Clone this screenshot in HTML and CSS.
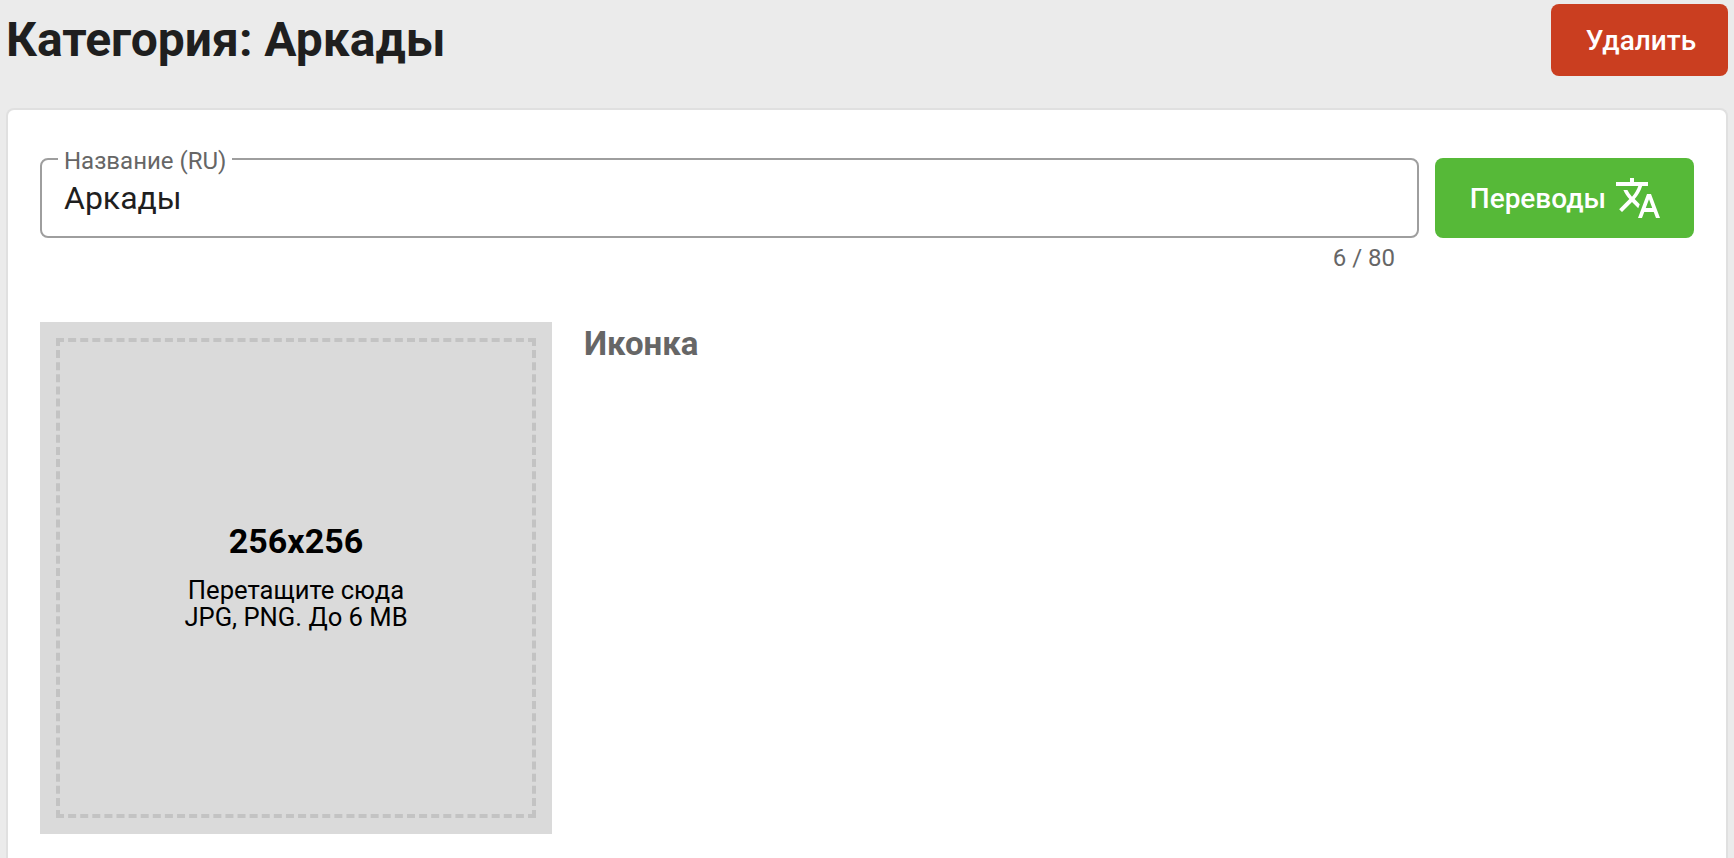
FILE: index.html
```html
<!DOCTYPE html>
<html lang="ru">
<head>
    <meta charset="UTF-8">
    <meta name="viewport" content="width=device-width, initial-scale=1.0">
    <title>Категория: Аркады</title>
    <link rel="stylesheet" href="styles.css">
</head>
<body>
    <header class="page-header">
        <h1>Категория: Аркады</h1>
        <button type="button" class="btn btn-delete">Удалить</button>
    </header>

    <main class="card">
        <!-- Category name -->
        <div class="name-row">
            <div class="field">
                <div class="field-box">
                    <label for="name_ru">Название (RU)</label>
                    <input type="text" id="name_ru" name="name_ru" value="Аркады" maxlength="80">
                </div>
                <div class="counter">6 / 80</div>
            </div>
            <button type="button" class="btn btn-translate">
                <span>Переводы</span>
                <svg viewBox="0 0 24 24" width="48" height="48" fill="currentColor">
                    <path d="M12.87 15.07l-2.54-2.51.03-.03c1.74-1.94 2.98-4.17 3.71-6.53H17V4h-7V2H8v2H1v1.99h11.17C11.5 7.92 10.44 9.75 9 11.35 8.07 10.32 7.3 9.19 6.69 8h-2c.73 1.63 1.73 3.17 2.98 4.56l-5.09 5.02L4 19l5-5 3.11 3.11.76-2.04zM18.5 10h-2L12 22h2l1.12-3h4.75L21 22h2l-4.5-12zm-2.62 7l1.62-4.33L19.12 17h-3.24z"/>
                </svg>
            </button>
        </div>

        <!-- Icon upload -->
        <div class="icon-row">
            <div class="upload">
                <div class="upload-inner">
                    <div class="upload-size">256x256</div>
                    <div class="upload-hint">Перетащите сюда<br>JPG, PNG. До 6 MB</div>
                </div>
            </div>
            <h2>Иконка</h2>
        </div>
    </main>
</body>
</html>
```
FILE: styles.css
```css
* {
    box-sizing: border-box;
}
body {
    display: flex;
    flex-direction: column;
    margin: 0;
    padding: 4px 6px 0;
    height: 100vh;
    font-family: Roboto, sans-serif;
    background-color: #ebebeb;
    color: #1f1f1f;
}
.page-header {
    display: flex;
    justify-content: space-between;
    align-items: center;
    height: 72px;
    margin-bottom: 32px;
}
h1 {
    margin: 0;
    font-size: 48px;
    line-height: 56px;
    font-weight: 700;
}
.btn {
    display: flex;
    align-items: center;
    justify-content: center;
    flex-shrink: 0;
    padding: 0;
    border: none;
    border-radius: 8px;
    color: #fff;
    font-family: inherit;
    font-size: 28px;
    font-weight: 500;
    cursor: pointer;
}
.btn-delete {
    width: 177px;
    height: 72px;
    padding-left: 3px;
    background-color: #ca3e20;
}
.btn-translate {
    justify-content: flex-end;
    width: 259px;
    height: 80px;
    padding-right: 32px;
    gap: 8px;
    background-color: #56b938;
}
.card {
    flex: 1;
    padding: 48px 32px 0;
    background-color: #fff;
    border: 2px solid #e0e0e0;
    border-bottom: none;
    border-radius: 8px 8px 0 0;
}
.name-row {
    display: flex;
    gap: 16px;
}
.field {
    flex: 1;
}
.field-box {
    position: relative;
    height: 80px;
    border: 2px solid #9e9e9e;
    border-radius: 8px;
}
/* label sits over the top border */
.field-box label {
    position: absolute;
    top: -13px;
    left: 16px;
    padding: 0 6px;
    background-color: #fff;
    color: #666;
    font-size: 24px;
    line-height: 28px;
}
.field-box input {
    width: 100%;
    height: 100%;
    padding: 0 22px;
    border: none;
    outline: none;
    background: transparent;
    color: #1f1f1f;
    font-family: inherit;
    font-size: 32px;
}
.counter {
    padding: 6px 24px 0 0;
    text-align: right;
    color: #666;
    font-size: 24px;
    line-height: 28px;
}
.icon-row {
    display: flex;
    gap: 32px;
    margin-top: 50px;
}
.upload {
    width: 512px;
    height: 512px;
    padding: 16px;
    background-color: #dadada;
}
.upload-inner {
    display: flex;
    flex-direction: column;
    align-items: center;
    justify-content: center;
    height: 100%;
    padding-bottom: 3px;
    border: 4px dashed #c3c3c3;
    color: #000;
    text-align: center;
}
.upload-size {
    margin-bottom: 18px;
    font-size: 34px;
    line-height: 36px;
    font-weight: 700;
}
.upload-hint {
    font-size: 25.6px;
    line-height: 27px;
}
h2 {
    margin: 3px 0 0;
    color: #666;
    font-size: 33px;
    line-height: 38px;
    font-weight: 700;
}
```
